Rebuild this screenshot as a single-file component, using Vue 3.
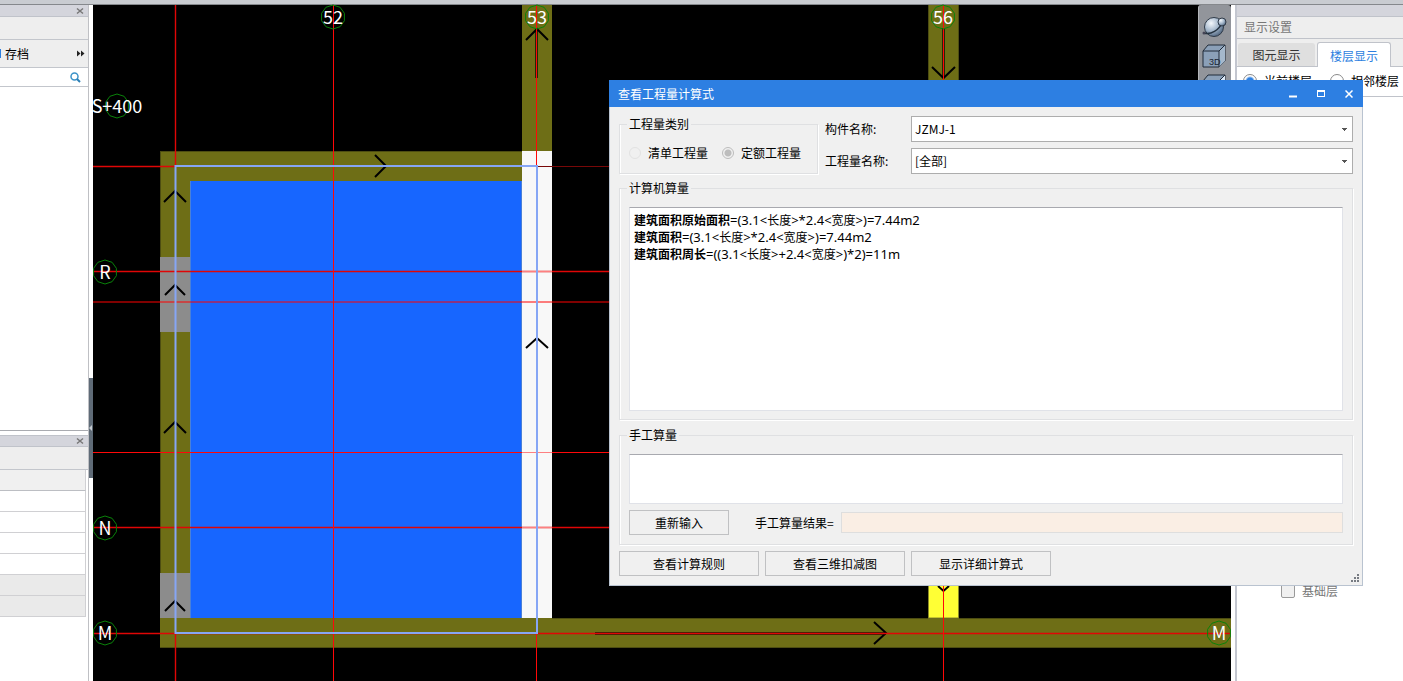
<script setup>
import { ref } from 'vue'

const category = ref('quota')
const component = ref('JZMJ-1')
const quantity = ref('[全部]')
const manual = ref('')
const result = ref('')
const floorMode = ref('current')
const baseFloor = ref(false)

const formulas = [
  { name: '建筑面积原始面积', text: '=(3.1<长度>*2.4<宽度>)=7.44m2' },
  { name: '建筑面积', text: '=(3.1<长度>*2.4<宽度>)=7.44m2' },
  { name: '建筑面积周长', text: '=((3.1<长度>+2.4<宽度>)*2)=11m' },
]

const propertyRows = ['head', 'plain', 'plain', 'plain', 'plain', 'muted', 'muted']

const bubbles = [
  { x: 333, y: 17, label: '52' },
  { x: 537, y: 17, label: '53' },
  { x: 943, y: 17, label: '56' },
  { x: 117, y: 106, label: 'S+400' },
  { x: 105, y: 272, label: 'R' },
  { x: 105, y: 528, label: 'N' },
  { x: 105, y: 633, label: 'M' },
  { x: 1219, y: 633, label: 'M' },
]

function ring(cx, cy) {
  return Array.from({ length: 10 }, (_, i) => {
    const a = (i * Math.PI) / 5
    return `${(cx + 12 * Math.sin(a)).toFixed(1)},${(cy - 12 * Math.cos(a)).toFixed(1)}`
  }).join(' ')
}
</script>

<template>
  <div class="app">
    <div class="topbar"></div>
    <div class="workspace">
      <aside class="left">
        <div class="panel-title">
          <button class="x" aria-label="关闭">
            <svg width="8" height="8" viewBox="0 0 8 8"><path d="M1 1.500l6 5M7 1.500l-6 5" stroke="#777" stroke-width="1.5" /></svg>
          </button>
        </div>
        <div class="strip"></div>
        <div class="archive">
          <span class="chip"></span><button class="link">存档</button>
          <button class="more" aria-label="更多">
            <svg width="8" height="7" viewBox="0 0 8 7"><path d="M0 .5l3.500 3-3.500 3zM4 .5l3.500 3-3.500 3z" fill="#222" /></svg>
          </button>
        </div>
        <div class="search">
          <input type="text" aria-label="搜索" />
          <svg width="11" height="11" viewBox="0 0 11 11"><circle cx="4.500" cy="4.500" r="3.500" fill="none" stroke="#3c93c8" stroke-width="1.500" /><path d="M7 7l3 3" stroke="#2b7fb5" stroke-width="2" /></svg>
        </div>
        <div class="tree"></div>
        <div class="panel-title second">
          <button class="x" aria-label="关闭">
            <svg width="8" height="8" viewBox="0 0 8 8"><path d="M1 1.500l6 5M7 1.500l-6 5" stroke="#777" stroke-width="1.5" /></svg>
          </button>
        </div>
        <div class="strip"></div>
        <div v-for="(kind, i) in propertyRows" :key="i" class="prop" :class="kind"></div>
      </aside>
      <div class="gutter">
        <div class="splitter"><svg width="3" height="6" viewBox="0 0 3 6"><path d="M3 0v6L0 3z" fill="#c5cad0" /></svg></div>
      </div>

      <main class="canvas">
        <svg class="drawing" viewBox="93 5 1138 676" preserveAspectRatio="xMinYMin meet">
          <g fill="#6e6e16">
            <rect x="522" y="5" width="30" height="147" />
            <rect x="928" y="5" width="31" height="95" />
            <rect x="160.500" y="151.500" width="362" height="496" stroke="#4d4d12" />
          </g>
          <path d="M928.500 5v95M958.500 5v95" stroke="#4d4d12" />
          <rect x="160" y="618" width="1071" height="30" fill="#6e6e16" />
          <path d="M552 618.500h679M160 647.500h1071" stroke="#4d4d12" />
          <rect x="160" y="257" width="31" height="75" fill="#8c8c8c" />
          <rect x="160" y="573" width="31" height="45" fill="#8c8c8c" />
          <rect x="190" y="181" width="332" height="437" fill="#1766ff" />
          <path d="M190.500 181v437M521.500 181v437" stroke="#4a80d8" />
          <rect x="522" y="151" width="30" height="467" fill="#f8f8f8" />
          <rect x="928.500" y="560" width="30" height="58" fill="#ffff35" stroke="#8a8a28" />

          <g stroke="#000" stroke-opacity=".65" stroke-width="3">
            <path d="M536.500 29v49M943.500 28v50M595 633.500h291" />
          </g>
          <g fill="none" stroke="#000" stroke-width="2">
            <path d="M164 202l11-11 11 11M165 295l10-10 10 10M164 433l11-11 11 11M165 611l10-10 10 10" />
            <path d="M526 348l11-10 11 10M375 155l11 11-11 11" />
            <path d="M526 40l11-11 11 11M932 67l11.500 11 11.500-11M938 586l5.500 5 5.500-5M874 622l12 11-12 11" />
          </g>

          <g stroke="#e00606" stroke-width="1.400">
            <path d="M175.500 5v161M175.500 633v48M93 166.500h82M93 527.500h516M93 633.500h1138M93 271.500h516" />
          </g>
          <path d="M537 166.500h72" stroke="#780808" />
          <path d="M93 302h516" stroke="#ff0000" stroke-opacity=".5" stroke-width="2" />
          <g stroke="#ff0808">
            <path d="M333.500 5v676M943.500 5v676M536.500 5v161M536.500 633v48M93 452.500h516" />
          </g>
          <path d="M522 271.500h30M522 452.500h30M522 527.500h30" stroke="#ff8080" />
          <rect x="175.500" y="166" width="361.500" height="467" fill="none" stroke="#86a6f5" stroke-width="2" />

          <g v-for="(b, i) in bubbles" :key="i">
            <polygon :points="ring(b.x, b.y)" fill="none" stroke="#0a820a" />
            <text :x="b.x" :y="b.y + 7" text-anchor="middle" class="axis">{{ b.label }}</text>
          </g>
        </svg>

        <nav class="viewbar">
          <button aria-label="动态观察">
            <svg width="26" height="24" viewBox="0 0 26 24">
              <defs><radialGradient id="ball" cx=".35" cy=".3" r=".8"><stop offset="0" stop-color="#f4f8fc" /><stop offset=".5" stop-color="#a4b7cb" /><stop offset="1" stop-color="#405671" /></radialGradient></defs>
              <circle cx="13" cy="13" r="9.500" fill="url(#ball)" stroke="#303b49" />
              <path d="M3 19C10 21 18 16 21 9" fill="none" stroke="#263442" stroke-width="1.500" />
              <circle cx="21" cy="8" r="4" fill="url(#ball)" stroke="#303b49" />
              <circle cx="3" cy="19" r="1.500" fill="#445" />
            </svg>
          </button>
          <button aria-label="三维">
            <svg width="26" height="24" viewBox="0 0 26 24">
              <path d="M2 7l5-6h17v16l-6 6H2z" fill="#8ba0b8" stroke="#202b38" stroke-linejoin="round" />
              <path d="M18 7l6-6v16l-6 6z" fill="#a5b8cc" /><path d="M2 7h16v16M18 7l6-6" fill="none" stroke="#202b38" />
              <text x="8" y="21" class="three">3D</text>
            </svg>
          </button>
          <button aria-label="俯视">
            <svg width="26" height="24" viewBox="0 0 26 24">
              <path d="M2 7l5-6h17v16l-6 6H2z" fill="#8ba0b8" stroke="#202b38" stroke-linejoin="round" />
              <path d="M18 7l6-6v16l-6 6z" fill="#dce9f8" /><path d="M2 7h16v16M18 7l6-6" fill="none" stroke="#202b38" />
            </svg>
          </button>
        </nav>
      </main>

      <aside class="right">
        <div class="grip"></div>
        <h2>显示设置</h2>
        <div class="tabs">
          <button class="tab">图元显示</button>
          <button class="tab active">楼层显示</button>
        </div>
        <div class="floors">
          <label><input v-model="floorMode" type="radio" value="current" name="floor" />当前楼层</label>
          <label><input v-model="floorMode" type="radio" value="near" name="floor" />相邻楼层</label>
        </div>
        <label class="base"><input v-model="baseFloor" type="checkbox" />基础层</label>
      </aside>
    </div>

    <section class="dialog" role="dialog" aria-labelledby="dlg-title">
      <header>
        <h1 id="dlg-title">查看工程量计算式</h1>
        <button aria-label="最小化"><svg width="8" height="8" viewBox="0 0 8 8"><path d="M0 6.500h8" stroke="#fff" stroke-width="2" /></svg></button>
        <button aria-label="最大化"><svg width="8" height="8" viewBox="0 0 8 8"><path d="M0 0h8v7H0zM1 2v4h6V2z" fill="#fff" fill-rule="evenodd" /></svg></button>
        <button aria-label="关闭"><svg width="8" height="8" viewBox="0 0 8 8"><path d="M.5.5l7 7M7.500.5l-7 7" stroke="#fff" stroke-width="1.500" /></svg></button>
      </header>
      <div class="body">
        <div class="filters">
          <fieldset class="category">
            <legend>工程量类别</legend>
            <label><input v-model="category" type="radio" name="cat" value="list" disabled class="faint" />清单工程量</label>
            <label><input v-model="category" type="radio" name="cat" value="quota" disabled />定额工程量</label>
          </fieldset>
          <div class="picks">
            <label for="comp">构件名称:</label>
            <select id="comp" v-model="component"><option>JZMJ-1</option></select>
            <label for="qty">工程量名称:</label>
            <select id="qty" v-model="quantity"><option>[全部]</option></select>
          </div>
        </div>

        <fieldset class="computed">
          <legend>计算机算量</legend>
          <div class="output">
            <p v-for="f in formulas" :key="f.name"><b>{{ f.name }}</b><template v-for="(part, i) in f.text.split(/(长度|宽度)/)" :key="i"><span :class="{ expr: i % 2 === 0 }">{{ part }}</span></template></p>
          </div>
        </fieldset>

        <fieldset class="hand">
          <legend>手工算量</legend>
          <textarea v-model="manual" aria-label="手工算量"></textarea>
          <div class="hand-row">
            <button class="btn">重新输入</button>
            <label for="res">手工算量结果=</label>
            <input id="res" v-model="result" type="text" readonly />
          </div>
        </fieldset>

        <div class="actions">
          <button class="btn">查看计算规则</button>
          <button class="btn">查看三维扣减图</button>
          <button class="btn">显示详细计算式</button>
        </div>
      </div>
      <svg class="resize" width="8" height="8" viewBox="0 0 8 8"><path d="M6 0h2v2H6zM3 3h2v2H3zM6 3h2v2H6zM0 6h2v2H0zM3 6h2v2H3zM6 6h2v2H6z" fill="#777b82" /></svg>
    </section>
  </div>
</template>

<style>
body {
  margin: 0;
}
</style>

<style scoped>
.app,
.app * {
  box-sizing: border-box;
}
.app {
  position: relative;
  display: flex;
  flex-direction: column;
  height: 100vh;
  overflow: hidden;
  background: #fff;
  color: #000;
  font: 12px/17px "Noto Sans CJK SC", sans-serif;
}
button,
input,
select,
textarea {
  margin: 0;
  padding: 0;
  font: inherit;
  color: inherit;
}
button {
  border: 0;
  background: none;
}
svg {
  display: block;
}
.topbar {
  height: 5px;
  flex: none;
  background: #c9ccd1;
  border-bottom: 1px solid #85888c;
}
.workspace {
  display: flex;
  flex: 1;
  min-height: 0;
}

.left {
  width: 89px;
  flex: none;
  border-right: 1px solid #bfc0c4;
  display: flex;
  flex-direction: column;
}
.panel-title {
  height: 12px;
  flex: none;
  display: flex;
  align-items: center;
  justify-content: flex-end;
  padding-right: 4px;
  background: #d4d5dc;
  border-bottom: 1px solid #c0c3ca;
}
.second {
  margin-top: 4px;
  border-top: 1px solid #c0c3ca;
}
.strip {
  height: 23px;
  flex: none;
  background: #eee;
  border-bottom: 1px solid #c3c6cc;
}
.archive {
  height: 28px;
  flex: none;
  display: flex;
  align-items: center;
  background: #eee;
  border-bottom: 1px solid #c3c6cc;
}
.chip {
  width: 1px;
  height: 9px;
  margin-right: 4px;
  background: #2d7fe0;
}
.more {
  margin: 0 3px 0 auto;
}
.search {
  height: 19px;
  flex: none;
  display: flex;
  align-items: center;
  padding-right: 7px;
  border-bottom: 1px solid #c3c6cc;
}
.search input {
  flex: 1;
  min-width: 0;
  border: 0;
  outline: 0;
  height: 16px;
}
.tree {
  height: 344px;
  flex: none;
  border-bottom: 1px solid #a9abb0;
}
.prop {
  height: 21px;
  flex: none;
  margin-right: 2px;
  border-right: 1px solid #d0d0d3;
  border-bottom: 1px solid #d0d0d3;
}
.prop.head {
  background: #f0f0f0;
  border-bottom-color: #bcbec3;
}
.prop.muted {
  background: #eaeaea;
}
.gutter {
  width: 4px;
  flex: none;
  padding-top: 373px;
}
.splitter {
  height: 100px;
  display: flex;
  align-items: center;
  background: #5f6b77;
}

.canvas {
  flex: 1;
  min-width: 0;
  position: relative;
  background: #000;
}
.drawing {
  width: 100%;
  height: 100%;
  overflow: visible;
}
.axis {
  font: 18px "Noto Sans CJK SC", sans-serif;
  fill: #fff;
}
.viewbar {
  position: absolute;
  top: 0;
  right: 0;
  width: 33px;
  height: 300px;
  padding: 9px 2px;
  display: flex;
  flex-direction: column;
  align-items: flex-start;
  gap: 6px;
  background: #92959b;
  border-left: 1px solid #b4b6ba;
  border-radius: 3px;
}
.three {
  font: 9px "Liberation Sans", sans-serif;
  fill: #1b2633;
}

.right {
  width: 168px;
  flex: none;
  margin-left: 4px;
  border-left: 2px solid #c3c6cf;
}
.grip {
  height: 12px;
  background: #d4d5dc;
  border-bottom: 1px solid #c0c3ca;
}
h1,
h2 {
  margin: 0;
  font: inherit;
}
h2 {
  height: 22px;
  padding: 1px 7px;
  background: #eee;
  border-bottom: 1px solid #c0c3ca;
  color: #777;
}
.tabs {
  height: 28px;
  display: flex;
  align-items: flex-end;
  gap: 2px;
  padding-left: 1px;
  background: #eee;
  border-bottom: 1px solid #c0c3ca;
}
.tab {
  width: 77px;
  height: 23px;
  background: #dfdfdf;
  border-radius: 3px 3px 0 0;
  color: #333;
}
.tab.active {
  width: 74px;
  height: 25px;
  margin-bottom: -1px;
  background: #fff;
  border: 1px solid #c0c3ca;
  border-bottom: 0;
  color: #2d7fe0;
}
.floors {
  height: 30px;
  display: flex;
  align-items: center;
  gap: 18px;
  padding: 0 0 2px 6px;
  border-bottom: 1px solid #c0c3ca;
}
label {
  display: flex;
  align-items: center;
  white-space: nowrap;
}
input[type='radio'],
input[type='checkbox'] {
  appearance: none;
  flex: none;
}
.floors input {
  width: 14px;
  height: 14px;
  margin-right: 7px;
  border: 1px solid #8a8a8a;
  border-radius: 50%;
}
.floors input:checked {
  background: radial-gradient(#2d7fe0 3px, #fff 5px);
}
.base {
  margin: 485px 0 0 44px;
  color: #777;
}
.base input {
  width: 14px;
  height: 14px;
  margin-right: 7px;
  border: 1px solid #9a9a9a;
  border-radius: 2px;
  background: #f0f0f0;
}

.dialog {
  position: absolute;
  top: 80px;
  right: 40px;
  width: 754px;
  background: #f0f0f0;
  border: 1px solid #b9c3d0;
  border-top: 0;
}
.dialog header {
  height: 27px;
  margin: 0 -1px;
  display: flex;
  align-items: center;
  background: #2d7fe2;
  color: #fff;
}
.dialog h1 {
  flex: 1;
  padding-left: 9px;
}
.dialog header button {
  width: 28px;
  height: 27px;
  display: grid;
  place-items: center;
}
.body {
  padding: 9px;
}
.filters {
  display: flex;
  gap: 7px;
}
fieldset {
  margin: 0;
  padding: 10px 9px 8px;
  min-width: 0;
  border: 1px solid #dfe0e2;
  box-shadow: inset 1px 0 #fff, 1px 1px #fff;
}
legend {
  height: 17px;
  margin-left: -2px;
  padding: 0 2px;
  line-height: 15px;
  background: #f0f0f0;
}
.category {
  width: 199px;
  flex: none;
  padding: 11px 9px 0;
}
.category label {
  display: inline-flex;
}
.category label + label {
  margin-left: 14px;
}
.category input {
  width: 12px;
  height: 12px;
  margin-right: 7px;
  border: 1px solid #bcbcbc;
  border-radius: 50%;
}
.category input:checked {
  background: radial-gradient(#bdbdbd 3px, #f0f0f0 4px);
}
.category .faint {
  border-color: #e2e2e2;
}
.picks {
  flex: 1;
  display: grid;
  grid-template-columns: 80px 1fr;
  gap: 6px;
}
.picks label {
  padding-bottom: 2px;
}
select {
  appearance: none;
  height: 26px;
  padding: 0 3px 2px;
  border: 1px solid #adadad;
  border-radius: 0;
  background-color: #fff;
  background-image: linear-gradient(#555, #555), linear-gradient(#555, #555), linear-gradient(#555, #555);
  background-repeat: no-repeat;
  background-size: 5px 1px, 3px 1px, 1px 1px;
  background-position: right 5px top 11px, right 6px top 12px, right 7px top 13px;
}
.computed {
  margin-top: 6px;
}
.output {
  height: 204px;
  padding: 3px 4px;
  background: #fff;
  border: 1px solid #e0e2e8;
  border-top-color: #a8a9af;
}
.output p {
  margin: 0;
  height: 17px;
  white-space: nowrap;
}
.expr {
  font-family: "Noto Sans", sans-serif;
  font-size: 13px;
}
.hand {
  margin-top: 7px;
  padding-bottom: 9px;
}
textarea {
  display: block;
  width: 100%;
  height: 50px;
  resize: none;
  background: #fff;
  border: 1px solid #e0e2e8;
  border-top-color: #a8a9af;
}
.hand-row {
  display: flex;
  align-items: center;
  margin-top: 6px;
}
.hand-row label {
  margin: 0 7px 0 26px;
}
.hand-row input {
  flex: 1;
  height: 21px;
  background: #faeee4;
  border: 1px solid #dedede;
}
.btn {
  width: 140px;
  height: 25px;
  border: 1px solid #c0c1c3;
}
.hand-row .btn {
  width: 100px;
}
.actions {
  display: flex;
  gap: 6px;
  margin-top: 6px;
}
.resize {
  position: absolute;
  right: 3px;
  bottom: 3px;
}
</style>
